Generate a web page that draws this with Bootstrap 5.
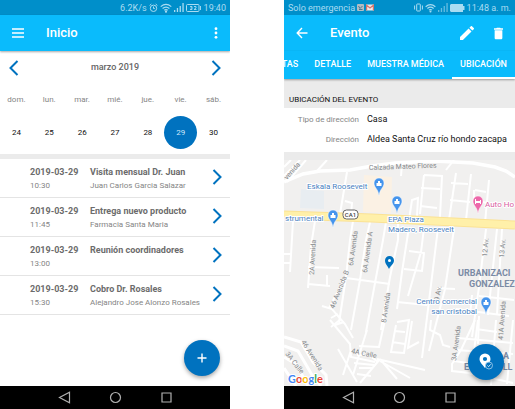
<!DOCTYPE html>
<html lang="es">
<head>
<meta charset="utf-8">
<meta name="viewport" content="width=device-width, initial-scale=1">
<title>Agenda de visitas</title>
<link href="https://cdn.jsdelivr.net/npm/bootstrap@5.3.0/dist/css/bootstrap.min.css" rel="stylesheet">
<style>
body { font-family: Roboto, "Liberation Sans", sans-serif; font-size: 8px; line-height: 14px; background: #fff; color: #222; }
svg { display: block; flex: none; }
button, a { color: inherit; text-decoration: none; }
.icon-btn { border: 0; background: none; padding: 0; color: inherit; line-height: 1; }
.screens { display: grid; grid-template-columns: 230fr 231fr; column-gap: 54px; min-height: 100vh; }
.phone { min-width: 0; overflow: hidden; }
.status { height: 15px; background: #008fca; color: #a9dcf2; font-size: 9px; gap: 2px; }
.appbar { height: 36px; background: #0abbfc; color: #fff; }
.appbar h1 { font-size: 13px; line-height: 16px; font-weight: 500; margin-left: 22px; }
.raised { box-shadow: 0 1px 2px rgba(0,0,0,.35); z-index: 1; }
.month { height: 33px; padding: 0 9px; color: #0072bf; }
.month h2 { font-size: 9px; font-weight: 500; color: #666; }
.week { table-layout: fixed; width: 100%; text-align: center; margin-bottom: 5px; }
.week th { height: 32px; padding: 0; font-weight: 400; color: #858585; text-align: center; }
.week td { height: 33px; padding: 0; }
.day { width: 33px; height: 33px; border-radius: 50%; color: #111; }
.day.chosen { background: #0072bf; color: #cfe8fa; }
.events { border-top: 5px solid #ebebeb; }
.event { height: 39px; padding: 6px 8px 0 30px; border-bottom: 1px solid #e4e4e4; color: #858585; }
.event strong { display: block; font-size: 9px; font-weight: 700; color: #6c6c6c; }
.event time { width: 60px; flex: none; }
.event svg { margin-top: 4px; color: #0072bf; }
.fab { position: absolute; width: 36px; height: 36px; border-radius: 50%; background: #0072bf; color: #fff; box-shadow: 0 2px 4px rgba(0,0,0,.35); border: 0; padding: 0; }
.fab-add { right: 10px; bottom: 10px; }
.fab-pin { right: 11px; bottom: 6px; }
.sysnav { height: 23px; background: #000; color: #b0b0b0; gap: 38px; }
.tabs { height: 28px; background: #0abbfc; color: #fff; font-size: 9px; font-weight: 500; overflow: hidden; }
.tabs a { padding: 6px 8px; border-bottom: 2px solid transparent; white-space: nowrap; flex: none; }
.tabs a.active { border-color: #fff; }
.section-title { height: 29px; padding: 14px 6px 0 5px; background: #ebebeb; font-size: 8px; font-weight: 400; line-height: 14px; color: #111; }
.details { display: grid; grid-template-columns: 75px 1fr; column-gap: 8px; line-height: 20px; padding: 2px 0; border-bottom: 8px solid #ebebeb; }
.details dt { text-align: right; font-weight: 400; color: #858585; }
.details dd { font-size: 9px; color: #111; white-space: nowrap; line-height: 19px; }
.map { flex: 1 1 0; min-height: 200px; background: #f1f0ef; }
.map > svg { width: 100%; height: 100%; }
.street { font-size: 7px; fill: #85888b; }
.place { font-size: 8px; fill: #4a7fc1; stroke: #fff; stroke-width: 2px; paint-order: stroke; stroke-linejoin: round; }
.district { font-size: 9px; font-weight: 700; fill: #7b8ba5; }
</style>
</head>
<body>
<main class="screens">

<section class="phone d-flex flex-column" aria-label="Inicio">
  <div class="status d-flex align-items-center justify-content-end pe-1">
    <span>6.2K/s</span>
    <svg width="9" height="10" viewBox="0 0 9 10" fill="none" stroke="currentColor"><circle cx="4.5" cy="5.3" r="3.2"/><path d="M4.5 3.5v2h1.3M.6 2.5 2.3 1M8.4 2.5 6.700 1"/></svg>
    <svg width="12" height="10" viewBox="0 0 12 10" fill="none" stroke="currentColor" stroke-width="1.200"><path d="M.7 3.600Q6-1 11.300 3.600M2.600 5.500Q6 2.600 9.400 5.500M4.300 7.300Q6 6 7.700 7.300"/><circle cx="6" cy="8.700" r=".5"/></svg>
    <svg width="10" height="9" viewBox="0 0 10 9" fill="currentColor"><path d="M0 7h1.300v2H0zM2.800 5h1.300v4H2.800zM5.600 3h1.300v6H5.600zM8.400 0h1.300v9H8.400z"/></svg>
    <svg width="16" height="8" viewBox="0 0 16 8" fill="none" stroke="currentColor"><rect x=".5" y=".5" width="12.500" height="7" rx="1"/><path d="M14.500 2v4M4 2.500h2v3H4M4.500 4H6M8 2.500h2V4L8 5.500h2.500" stroke-width=".9"/></svg>
    <span>19:40</span>
  </div>
  <header class="appbar raised position-relative d-flex align-items-center">
    <button class="icon-btn ms-2 ps-1" aria-label="Menú"><svg width="12" height="10" viewBox="0 0 12 10" stroke="currentColor" stroke-width="1.300"><path d="M0 1h12M0 5h12M0 9h12"/></svg></button>
    <h1 class="mb-0">Inicio</h1>
    <button class="icon-btn ms-auto me-2 pe-1" aria-label="Más opciones"><svg width="4" height="12" viewBox="0 0 4 12" fill="currentColor"><circle cx="2" cy="1.700" r="1.400"/><circle cx="2" cy="6" r="1.400"/><circle cx="2" cy="10.300" r="1.400"/></svg></button>
  </header>
  <div class="month d-flex align-items-center justify-content-between">
    <button class="icon-btn" aria-label="Mes anterior"><svg width="10" height="16" viewBox="0 0 10 16" fill="none" stroke="currentColor" stroke-width="2"><path d="M8.500 1 1.500 8l7 7"/></svg></button>
    <h2 class="mb-0">marzo 2019</h2>
    <button class="icon-btn" aria-label="Mes siguiente"><svg width="10" height="16" viewBox="0 0 10 16" fill="none" stroke="currentColor" stroke-width="2"><path d="m1.500 1 7 7-7 7"/></svg></button>
  </div>
  <table class="week">
    <thead><tr><th>dom.</th><th>lun.</th><th>mar.</th><th>mié.</th><th>jue.</th><th>vie.</th><th>sáb.</th></tr></thead>
    <tbody><tr>
      <td><button class="icon-btn day">24</button></td><td><button class="icon-btn day">25</button></td><td><button class="icon-btn day">26</button></td><td><button class="icon-btn day">27</button></td><td><button class="icon-btn day">28</button></td><td><button class="icon-btn day chosen" aria-pressed="true">29</button></td><td><button class="icon-btn day">30</button></td>
    </tr></tbody>
  </table>
  <div class="position-relative flex-grow-1">
    <div class="events">
      <a href="#" class="event d-flex"><time><strong>2019-03-29</strong>10:30</time><span class="flex-grow-1 text-nowrap"><strong>Visita mensual Dr. Juan</strong>Juan Carlos Garcia Salazar</span><svg width="10" height="16" viewBox="0 0 10 16" fill="none" stroke="currentColor" stroke-width="2"><path d="m1.500 1 7 7-7 7"/></svg></a>
      <a href="#" class="event d-flex"><time><strong>2019-03-29</strong>11:45</time><span class="flex-grow-1 text-nowrap"><strong>Entrega nuevo producto</strong>Farmacia Santa Maria</span><svg width="10" height="16" viewBox="0 0 10 16" fill="none" stroke="currentColor" stroke-width="2"><path d="m1.500 1 7 7-7 7"/></svg></a>
      <a href="#" class="event d-flex"><time><strong>2019-03-29</strong>13:00</time><span class="flex-grow-1 text-nowrap"><strong>Reunión coordinadores</strong></span><svg width="10" height="16" viewBox="0 0 10 16" fill="none" stroke="currentColor" stroke-width="2"><path d="m1.500 1 7 7-7 7"/></svg></a>
      <a href="#" class="event d-flex"><time><strong>2019-03-29</strong>15:30</time><span class="flex-grow-1 text-nowrap"><strong>Cobro Dr. Rosales</strong>Alejandro Jose Alonzo Rosales</span><svg width="10" height="16" viewBox="0 0 10 16" fill="none" stroke="currentColor" stroke-width="2"><path d="m1.500 1 7 7-7 7"/></svg></a>
    </div>
    <button class="fab fab-add d-flex align-items-center justify-content-center" aria-label="Agregar evento"><svg width="10" height="10" viewBox="0 0 10 10" stroke="currentColor" stroke-width="1.400"><path d="M5 .5v9M.5 5h9"/></svg></button>
  </div>
  <nav class="sysnav d-flex align-items-center justify-content-center" aria-label="Sistema">
    <button class="icon-btn" aria-label="Atrás"><svg width="13" height="13" viewBox="0 0 13 13" fill="none" stroke="currentColor" stroke-width="1.200"><path d="M11.500 1.200v10.600L1.500 6.500z"/></svg></button>
    <button class="icon-btn" aria-label="Inicio"><svg width="13" height="13" viewBox="0 0 13 13" fill="none" stroke="currentColor" stroke-width="1.200"><circle cx="6.500" cy="6.500" r="5"/></svg></button>
    <button class="icon-btn" aria-label="Recientes"><svg width="13" height="13" viewBox="0 0 13 13" fill="none" stroke="currentColor" stroke-width="1.200"><path d="M2 2h9v9H2z"/></svg></button>
  </nav>
</section>

<section class="phone d-flex flex-column" aria-label="Evento">
  <div class="status d-flex align-items-center ps-1 pe-1">
    <span class="text-nowrap">Solo emergencia</span>
    <svg width="7" height="7" viewBox="0 0 7 7"><rect width="7" height="7" rx="1" fill="#b3bdc3"/><path d="m1.500 2 1.500 2.500L5.500 2M2 5.500h3.500" fill="none" stroke="#4b7a91"/></svg>
    <svg width="8" height="7" viewBox="0 0 8 7"><rect y=".5" width="8" height="6" fill="#f0e9e8"/><path d="M.6 6.500V1.200L4 4l3.400-2.800v5.300" fill="none" stroke="#d8756b" stroke-width="1.200"/></svg>
    <svg class="ms-auto" width="9" height="9" viewBox="0 0 9 9" fill="none" stroke="currentColor"><rect x="2.700" y="1" width="3.600" height="7" rx=".5"/><path d="M.6 2.500v4M8.400 2.500v4"/></svg>
    <svg width="11" height="10" viewBox="0 0 12 10" fill="none" stroke="currentColor" stroke-width="1.200"><path d="M.7 3.600Q6-1 11.300 3.600M2.600 5.500Q6 2.600 9.400 5.500M4.300 7.300Q6 6 7.700 7.300"/><circle cx="6" cy="8.700" r=".5"/></svg>
    <svg width="10" height="9" viewBox="0 0 10 9" fill="currentColor" opacity=".6"><path d="M0 7h1.300v2H0zM2.800 5h1.300v4H2.800zM5.600 3h1.300v6H5.600zM8.400 0h1.300v9H8.400z"/></svg>
    <svg width="15" height="8" viewBox="0 0 15 8" fill="currentColor"><path d="M1 0h12v2h1.500v4H13v2H1L0 7V1z"/></svg>
    <span class="text-nowrap">11:48 a. m.</span>
  </div>
  <header class="appbar d-flex align-items-center">
    <button class="icon-btn ms-2 ps-1" aria-label="Volver"><svg width="12" height="12" viewBox="0 0 12 12" fill="none" stroke="currentColor" stroke-width="1.400"><path d="M11.500 6H1.500M6 1 1.200 6 6 11"/></svg></button>
    <h1 class="mb-0">Evento</h1>
    <button class="icon-btn ms-auto" aria-label="Editar"><svg width="14" height="14" viewBox="3 3 18 18" fill="currentColor"><path d="M3 17.250V21h3.750L17.810 9.940l-3.750-3.750L3 17.250zM20.710 7.040a1 1 0 0 0 0-1.410l-2.340-2.340a1 1 0 0 0-1.410 0l-1.830 1.830 3.750 3.750 1.830-1.830z"/></svg></button>
    <button class="icon-btn ms-3 me-2 ps-1 pe-1" aria-label="Eliminar"><svg width="9" height="13" viewBox="5 3 14 18" fill="currentColor"><path d="M6 19c0 1.100.9 2 2 2h8c1.100 0 2-.9 2-2V7H6v12zM19 4h-3.500l-1-1h-5l-1 1H5v2h14V4z"/></svg></button>
  </header>
  <nav class="tabs raised position-relative d-flex justify-content-end align-items-end" aria-label="Secciones">
    <a href="#">TAS</a><a href="#">DETALLE</a><a href="#">MUESTRA MÉDICA</a><a href="#" class="active" aria-current="page">UBICACIÓN</a>
  </nav>
  <h2 class="section-title mb-0">UBICACIÓN DEL EVENTO</h2>
  <dl class="details mb-0"><dt>Tipo de dirección</dt><dd class="mb-0">Casa</dd><dt>Dirección</dt><dd class="mb-0">Aldea Santa Cruz río hondo zacapa</dd></dl>
  <div class="map position-relative">
    <svg viewBox="0 0 231 226" preserveAspectRatio="xMidYMid slice" role="img" aria-label="Mapa de la ubicación">
      <defs>
        <g id="pin"><path d="M0 7C-1-1-5-1-5-6A5 5 0 0 1 5-6C5-1 1-1 0 7z"/></g>
      </defs>
      <path fill="#e8edf1" d="M17 29l23 2v18l-24-1z"/><path fill="#fbf1e4" d="M80 15l28 2-1 36-28-1z"/>
      <g fill="none" stroke="#fff" stroke-width="2">
        <path stroke-width="3.500" d="M0 22 19 14 36 11 66 10 88 6 111 3 150 1 189 3 211 7 222 11 231 17"/>
        <path d="M0 16 16 0M3 22 22 0M0 7 7 0M33 11 43 0M63 12 56 54M61 41l7 2-1 12M118 4l-1 12"/>
        <path d="M9 61 6 112M0 94h8M0 103h7M31 61 27 86 24 128M24 107l31 1M24 124l22 2M43 115v11"/>
        <path d="M69 61 66 80 62 117 55 163M86 62 82 80 76 120 67 170M102 62 99 80 91 123 82 172M114 80 106 117 97 170M62 118l44 6M114 62v18"/>
        <path d="M38 146l10 3 13 15 8 14M47 158l7-4M47 167l10-8M61 118 45 148"/>
        <path d="M140 15l18 1-2 41M140 15l-4 39M137 28l19 1M136 46l17 2M172 13 165 60M187 14 182 60M167 23l17 1M166 40l20 2M205 20 201 63M191 30l11 2M190 30v10l13 3M125 60l3-20 6-2-1 18M170 0l-8 10"/>
        <path d="M125 67l-7 45-5 37M140 68l-3 24-13 44M154 68l-16 130M125 91l15 2-2 18-18-2M170 69l-9 60-16 62M202 69l-7 58-7 50M218 69l-5 85M153 128l18 1M113 142l30 3"/>
        <path d="M188 135l-2 20M172 149l53 7M195 136l35 4M195 156l-1 28M213 69l-9 86"/>
        <path d="M46 160l20 24 1 13 24 5M51 165l9-3M83 170l-6 19-8 26M101 160l-6 27-20-1M67 190l-8 25M93 199l48 11M96 199 76 223M96 199l17 20M96 201l30 17M70 203l20 2M73 214l14 2M54 189l19 33M73 195h12l9 7M75 208h13"/>
        <path d="M113 162l12-2-5 33-13-1 5-27M110 171l11 1M108 182l13 2M128 161l-4 27 11-6M147 160l-1 10 10 5 3 10 7 2"/>
        <path stroke-width="3" d="M0 177l17 5 12 20 13 13 1 11M0 186l14 5 14 24 9 11M0 208l12 18M0 197l12 7 12 22"/>
        <path d="M191 160l-14 30-9 14v7l18 2M174 178l55 5M172 190l57 4M170 201l20 3M194 160l-7 55M212 160l-5 65M229 160l-6 64M184 213l45 10M192 169l21 3"/>
      </g>
      <path d="M0 55 88 58 231 65" stroke="#fbe294" stroke-width="9" fill="none"/><path d="M0 55 88 58 231 65" stroke="#fff0a9" stroke-width="7" fill="none"/>
      <g class="street">
        <text transform="translate(85 10)rotate(-2)">Calzada Mateo Flores</text>
        <text transform="translate(3 20)rotate(-48)">venida</text>
        <text transform="translate(30 115)rotate(-87)">2A Avenida</text>
        <text transform="translate(69 106)rotate(-82)">6A Avenida</text>
        <text transform="translate(83 113)rotate(-82)">6A Avenida A</text>
        <text transform="translate(50 149)rotate(-68)">46 Avenida B</text>
        <text transform="translate(102 163)rotate(-82)">8 Avenida</text>
        <text transform="translate(203 97)rotate(-85)">12 Av.</text>
        <text transform="translate(220 98)rotate(-85)">13 Av.</text>
        <text transform="translate(155 141)rotate(-80)">9 Av.</text>
        <text transform="translate(219 180)rotate(-86)">41A Avenida</text>
        <text transform="translate(172 201)rotate(-82)">3A Avenida</text>
        <text transform="translate(67 193)rotate(12)">4A Calle</text>
        <text transform="translate(17 182)rotate(58)">46 Avenida</text>
        <text transform="translate(1 194)rotate(52)">3A Calle</text>
      </g>
      <g class="place">
        <text x="23" y="29">Eskala Roosevelt</text><text x="1" y="61">strumental</text>
        <text x="104" y="62">EPA Plaza</text><text x="104" y="72">Madero, Roosevelt</text>
        <text x="193" y="144" text-anchor="end">Centro comercial</text><text x="193" y="154" text-anchor="end">san cristobal</text>
        <text x="201" y="47" style="fill:#d9609f">Auto Ho</text>
      </g>
      <g class="district"><text x="174" y="116">URBANIZACI</text><text x="185" y="127">GONZALEZ</text><text x="219" y="199">A</text><text x="180" y="210">E</text><text x="216" y="210">ILL</text></g>
      <g fill="#4594ec" stroke="#fff" stroke-width=".5">
        <use href="#pin" x="95" y="29"/><use href="#pin" x="113" y="47"/><use href="#pin" x="49" y="61"/><use href="#pin" x="202" y="148"/><use href="#pin" x="194" y="47" fill="#ed67aa"/>
      </g>
      <g fill="#fff"><path id="bag" d="M92.500 23h5v3h-5zM94 21h2v2h-2z"/><use href="#bag" x="18" y="18"/><use href="#bag" x="-46" y="32"/><use href="#bag" x="107" y="119"/><path d="M191 39h1v2h4v-1h1v4h-1v-1h-4v1h-1z"/></g>
      <rect x="59" y="50" width="15" height="9" rx="3.500" fill="#fff" stroke="#666"/><text x="66.500" y="57" text-anchor="middle" font-size="6" font-weight="500" fill="#444">CA1</text>
      <path fill="#0072bf" d="M105 109c-1-3-4-5-4-8.500a4.500 4.500 0 0 1 9 0c0 3.500-4 5.500-5 8.500z"/><circle cx="105.500" cy="100.500" r="1.500" fill="#fff"/>
      <text x="4" y="223" font-family="Lato, sans-serif" font-size="11" font-weight="700" stroke="#fff" stroke-width="2" paint-order="stroke"><tspan fill="#4285f4">G</tspan><tspan fill="#ea4335">o</tspan><tspan fill="#fbbc05">o</tspan><tspan fill="#4285f4">g</tspan><tspan fill="#34a853">l</tspan><tspan fill="#ea4335">e</tspan></text>
    </svg>
    <button class="fab fab-pin d-flex align-items-center justify-content-center" aria-label="Marcar ubicación"><svg width="16" height="18" viewBox="0 0 16 18"><path fill="#fff" fill-rule="evenodd" d="M7 15C5 12 1.500 9.500 1.500 6a5.500 5.500 0 0 1 11 0c0 3.500-3.500 6-5.500 9zM7 3.900a2.100 2.100 0 1 0 0 4.200 2.100 2.100 0 0 0 0-4.200z"/><circle cx="11" cy="12.500" r="3.500" fill="#0072bf" stroke="#a9d2ef" stroke-width=".8"/><path d="m9.400 12.500 1.200 1.200 2-2.300" fill="none" stroke="#fff" stroke-width=".8"/></svg></button>
  </div>
  <nav class="sysnav d-flex align-items-center justify-content-center" aria-label="Sistema">
    <button class="icon-btn" aria-label="Atrás"><svg width="13" height="13" viewBox="0 0 13 13" fill="none" stroke="currentColor" stroke-width="1.200"><path d="M11.500 1.200v10.600L1.500 6.500z"/></svg></button>
    <button class="icon-btn" aria-label="Inicio"><svg width="13" height="13" viewBox="0 0 13 13" fill="none" stroke="currentColor" stroke-width="1.200"><circle cx="6.500" cy="6.500" r="5"/></svg></button>
    <button class="icon-btn" aria-label="Recientes"><svg width="13" height="13" viewBox="0 0 13 13" fill="none" stroke="currentColor" stroke-width="1.200"><path d="M2 2h9v9H2z"/></svg></button>
  </nav>
</section>
</main>
<script src="https://cdn.jsdelivr.net/npm/bootstrap@5.3.0/dist/js/bootstrap.bundle.min.js"></script>
</body>
</html>
